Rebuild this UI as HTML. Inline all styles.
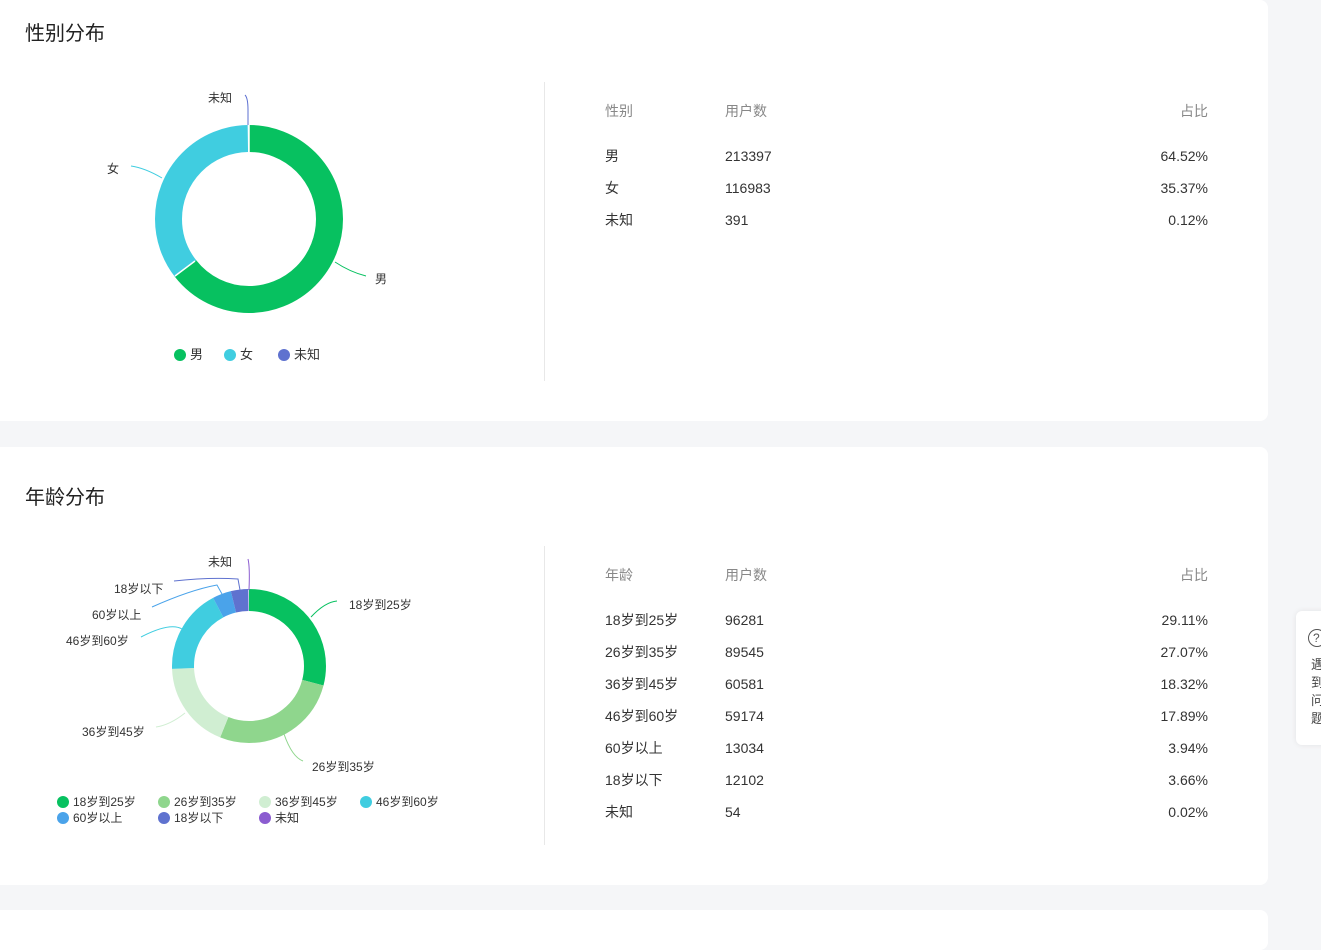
<!DOCTYPE html>
<html><head><meta charset="utf-8"><style>
*{margin:0;padding:0;box-sizing:border-box}
body{width:1321px;height:935px;background:#f5f6f8;font-family:"Liberation Sans","Noto Sans CJK SC",sans-serif;color:#333;position:relative;overflow:hidden}
.card{position:absolute;left:0;width:1268px;background:#fff;border-radius:0 8px 8px 0}
.title{position:absolute;left:25px;font-size:20px;color:#222;line-height:26px}
.div{position:absolute;left:544px;width:1px;background:#e8e8e8}
.t{position:absolute;font-size:14px;color:#333;white-space:nowrap;line-height:20px}
.h{color:#888}
.r{text-align:right;width:100px}
.lbl{position:absolute;font-size:12px;color:#333;white-space:nowrap}
.dot{display:inline-block;width:12px;height:12px;border-radius:50%;vertical-align:-2px;margin-right:4px}
</style></head><body>
<div class="card" style="top:0;height:421px"></div>
<div class="card" style="top:447px;height:438px"></div>
<div class="card" style="top:910px;height:40px"></div>
<div style="position:absolute;left:1296px;top:611px;width:40px;height:134px;background:#fff;border-radius:6px;box-shadow:0 0 6px rgba(0,0,0,.08)"></div>
<div style="position:absolute;left:1308px;top:629px;width:18px;height:18px;border:1px solid #555;border-radius:50%;font-size:12px;line-height:16px;padding-left:4px;color:#555">?</div>
<div style="position:absolute;left:1311px;top:656px;font-size:13px;line-height:18px;color:#444;width:12px;overflow:hidden">遇到问题</div>

<div class="title" style="top:21px">性别分布</div>
<div class="div" style="top:82px;height:299px"></div>
<svg style="position:absolute;left:0;top:0" width="540" height="420">
<g transform="rotate(-90 249 219)" fill="none">
<circle cx="249" cy="219" r="80.5" stroke="#07c160" stroke-width="27" pathLength="100" stroke-dasharray="64.52 100"/>
<circle cx="249" cy="219" r="80.5" stroke="#40cde0" stroke-width="27" pathLength="100" stroke-dasharray="35.37 100" stroke-dashoffset="-64.52"/>
</g>
<line x1="249" y1="125" x2="249" y2="152" stroke="#fff" stroke-width="1.5"/>
<line x1="175" y1="276" x2="195" y2="261" stroke="#fff" stroke-width="1.5"/>
<path d="M245 95 Q248 98 248 110 L248 125" stroke="#5b6fd1" fill="none"/>
<path d="M131 166 Q145 168 162 178" stroke="#40cde0" fill="none"/>
<path d="M335 262 Q350 272 366 276" stroke="#07c160" fill="none"/>
</svg>
<div class="lbl" style="left:208px;top:89px">未知</div>
<div class="lbl" style="left:107px;top:160px">女</div>
<div class="lbl" style="left:375px;top:270px">男</div>
<div class="lbl" style="left:174px;top:344px;font-size:13px"><span class="dot" style="background:#07c160"></span>男<span class="dot" style="background:#40cde0;margin-left:21px"></span>女<span class="dot" style="background:#5f72cf;margin-left:25px"></span>未知</div>

<div class="t h" style="left:605px;top:101px">性别</div>
<div class="t h" style="left:725px;top:101px">用户数</div>
<div class="t h r" style="left:1108px;top:101px">占比</div>
<div class="t" style="left:605px;top:146px">男</div><div class="t" style="left:725px;top:146px">213397</div><div class="t r" style="left:1108px;top:146px">64.52%</div>
<div class="t" style="left:605px;top:178px">女</div><div class="t" style="left:725px;top:178px">116983</div><div class="t r" style="left:1108px;top:178px">35.37%</div>
<div class="t" style="left:605px;top:210px">未知</div><div class="t" style="left:725px;top:210px">391</div><div class="t r" style="left:1108px;top:210px">0.12%</div>

<div class="title" style="top:485px">年龄分布</div>
<div class="div" style="top:546px;height:299px"></div>
<svg style="position:absolute;left:0;top:447px" width="540" height="420">
<g transform="rotate(-90 249 219)" fill="none" stroke-width="22">
<circle cx="249" cy="219" r="66" stroke="#07c160" pathLength="100" stroke-dasharray="29.11 100"/>
<circle cx="249" cy="219" r="66" stroke="#8fd68d" pathLength="100" stroke-dasharray="27.07 100" stroke-dashoffset="-29.11"/>
<circle cx="249" cy="219" r="66" stroke="#d0eed2" pathLength="100" stroke-dasharray="18.32 100" stroke-dashoffset="-56.18"/>
<circle cx="249" cy="219" r="66" stroke="#40cde0" pathLength="100" stroke-dasharray="17.89 100" stroke-dashoffset="-74.5"/>
<circle cx="249" cy="219" r="66" stroke="#4aa3ea" pathLength="100" stroke-dasharray="3.94 100" stroke-dashoffset="-92.39"/>
<circle cx="249" cy="219" r="66" stroke="#5f72cf" pathLength="100" stroke-dasharray="3.66 100" stroke-dashoffset="-96.33"/>
</g>
<path d="M248 112 Q250 120 249 143" stroke="#8b5cd0" fill="none"/>
<path d="M174 134 Q210 130 238 132 L240 143" stroke="#5f72cf" fill="none"/>
<path d="M152 160 Q190 143 217 138 L222 147" stroke="#4aa3ea" fill="none"/>
<path d="M141 190 Q170 175 182 182" stroke="#40cde0" fill="none"/>
<path d="M156 280 Q170 278 185 266" stroke="#d0eed2" fill="none"/>
<path d="M284 287 Q292 310 303 314" stroke="#8fd68d" fill="none"/>
<path d="M311 170 Q325 155 337 154" stroke="#07c160" fill="none"/>
</svg>
<div class="lbl" style="left:208px;top:553px">未知</div>
<div class="lbl" style="left:114px;top:580px">18岁以下</div>
<div class="lbl" style="left:92px;top:606px">60岁以上</div>
<div class="lbl" style="left:66px;top:632px">46岁到60岁</div>
<div class="lbl" style="left:82px;top:723px">36岁到45岁</div>
<div class="lbl" style="left:312px;top:758px">26岁到35岁</div>
<div class="lbl" style="left:349px;top:596px">18岁到25岁</div>
<div class="lbl" style="left:57px;top:793px"><span class="dot" style="background:#07c160"></span>18岁到25岁</div>
<div class="lbl" style="left:158px;top:793px"><span class="dot" style="background:#8fd68d"></span>26岁到35岁</div>
<div class="lbl" style="left:259px;top:793px"><span class="dot" style="background:#d0eed2"></span>36岁到45岁</div>
<div class="lbl" style="left:360px;top:793px"><span class="dot" style="background:#40cde0"></span>46岁到60岁</div>
<div class="lbl" style="left:57px;top:809px"><span class="dot" style="background:#4aa3ea"></span>60岁以上</div>
<div class="lbl" style="left:158px;top:809px"><span class="dot" style="background:#5f72cf"></span>18岁以下</div>
<div class="lbl" style="left:259px;top:809px"><span class="dot" style="background:#8b5cd0"></span>未知</div>

<div class="t h" style="left:605px;top:565px">年龄</div>
<div class="t h" style="left:725px;top:565px">用户数</div>
<div class="t h r" style="left:1108px;top:565px">占比</div>
<div class="t" style="left:605px;top:610px">18岁到25岁</div><div class="t" style="left:725px;top:610px">96281</div><div class="t r" style="left:1108px;top:610px">29.11%</div>
<div class="t" style="left:605px;top:642px">26岁到35岁</div><div class="t" style="left:725px;top:642px">89545</div><div class="t r" style="left:1108px;top:642px">27.07%</div>
<div class="t" style="left:605px;top:674px">36岁到45岁</div><div class="t" style="left:725px;top:674px">60581</div><div class="t r" style="left:1108px;top:674px">18.32%</div>
<div class="t" style="left:605px;top:706px">46岁到60岁</div><div class="t" style="left:725px;top:706px">59174</div><div class="t r" style="left:1108px;top:706px">17.89%</div>
<div class="t" style="left:605px;top:738px">60岁以上</div><div class="t" style="left:725px;top:738px">13034</div><div class="t r" style="left:1108px;top:738px">3.94%</div>
<div class="t" style="left:605px;top:770px">18岁以下</div><div class="t" style="left:725px;top:770px">12102</div><div class="t r" style="left:1108px;top:770px">3.66%</div>
<div class="t" style="left:605px;top:802px">未知</div><div class="t" style="left:725px;top:802px">54</div><div class="t r" style="left:1108px;top:802px">0.02%</div>
</body></html>
